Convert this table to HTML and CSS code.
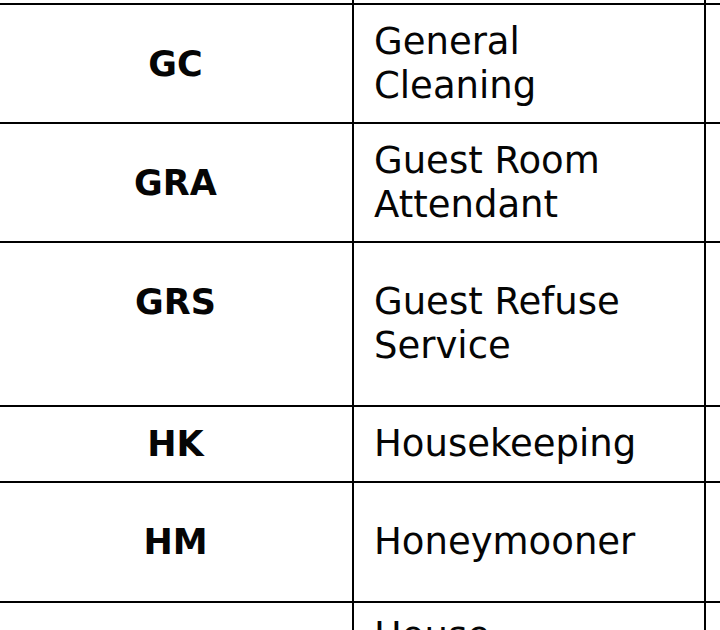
FILE: index.html
```html
<!DOCTYPE html>
<html lang="en">
<head>
<meta charset="utf-8">
<title>Housekeeping abbreviations</title>
<link rel="stylesheet" href="styles.css">
</head>
<body>
<div class="viewport">
  <table class="terms">
    <colgroup>
      <col class="col-abbr">
      <col class="col-term">
      <col class="col-extra">
    </colgroup>
    <tbody>
      <tr class="row-prev"><td class="abbr"></td><td class="term"></td><td class="extra"></td></tr>
      <tr class="row-2l"><td class="abbr">GC</td><td class="term">General<br>Cleaning</td><td class="extra"></td></tr>
      <tr class="row-2l"><td class="abbr">GRA</td><td class="term">Guest Room<br>Attendant</td><td class="extra"></td></tr>
      <tr class="row-3l"><td class="abbr">GRS<br>&nbsp;</td><td class="term">Guest Refuse<br>Service</td><td class="extra"></td></tr>
      <tr class="row-1l"><td class="abbr">HK</td><td class="term">Housekeeping</td><td class="extra"></td></tr>
      <tr class="row-2l hm"><td class="abbr">HM</td><td class="term">Honeymooner</td><td class="extra"></td></tr>
      <tr class="row-next"><td class="abbr">HU</td><td class="term">House<br>Use</td><td class="extra"></td></tr>
    </tbody>
  </table>
</div>
</body>
</html>
```
FILE: styles.css
```css
html, body {
  margin: 0;
  padding: 0;
  background: #ffffff;
}

.viewport {
  width: 720px;
  height: 630px;
  overflow: hidden;
  background: #ffffff;
}

.terms {
  border-collapse: collapse;
  table-layout: fixed;
  width: 910px;
  margin-top: -57px;
  margin-left: -3px;
  font-family: "DejaVu Sans", Verdana, sans-serif;
  color: #050505;
}

.col-abbr { width: 355px; }
.col-term { width: 352px; }
.col-extra { width: 203px; }

.terms td {
  border: 2px solid #000000;
  vertical-align: middle;
  padding: 0;
}

.abbr {
  text-align: center;
  font-weight: bold;
  font-size: 35px;
  line-height: 44px;
}

.term {
  padding-left: 20px !important;
  font-size: 37px;
  line-height: 44px;
}

.row-prev { height: 60px; }
.row-2l { height: 119px; }
.row-3l { height: 164px; }
.row-1l { height: 76px; }
.hm { height: 120px; }

.row-next { height: 160px; }
.row-next .term {
  vertical-align: top;
  padding-top: 11px !important;
}
.row-next .abbr {
  vertical-align: top;
  padding-top: 70px !important;
}
```
